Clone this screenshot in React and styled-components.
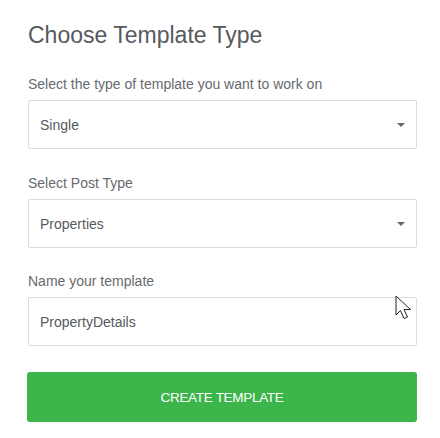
import styled, { createGlobalStyle } from "styled-components"

const GlobalStyle = createGlobalStyle`
  body {
    margin: 0;
    background: #fff;
    font-family: "Liberation Sans", Arial, sans-serif;
  }
`

const Page = styled.div`
  width: 440px;
  height: 438px;
  box-sizing: border-box;
  padding: 20px 23px 0 28px;
  display: flex;
  flex-direction: column;
`

const Title = styled.h1`
  margin: 0 0 26px;
  font-size: 23px;
  font-weight: normal;
  line-height: 30px;
  color: #555a5e;
`

const Field = styled.div`
  display: flex;
  flex-direction: column;
  margin-bottom: ${(p) => p.gap || 26}px;
`

const Label = styled.label`
  font-size: 14px;
  line-height: 16px;
  color: #666a6e;
  margin-bottom: 8px;
`

const Box = styled.div`
  position: relative;
  height: 49px;
  box-sizing: border-box;
  border: 1px solid #dcdcdc;
  border-radius: 2px;
  display: flex;
  align-items: center;
  justify-content: space-between;
  padding: 0 11px 0 11px;
  font-size: 14px;
  color: #555a5e;
`

const Caret = styled.span`
  width: 0;
  height: 0;
  border-left: 4px solid transparent;
  border-right: 4px solid transparent;
  border-top: 4px solid #666;
`

const Pointer = styled.svg`
  position: absolute;
  right: 1px;
  top: -3px;
`

const Button = styled.button`
  margin-left: -1px;
  height: 50px;
  border: none;
  border-radius: 3px;
  background: #3cb54b;
  color: #fff;
  font-family: "Liberation Sans", Arial, sans-serif;
  font-size: 13.5px;
  letter-spacing: -0.3px;
  cursor: pointer;
`

function Select({ value }) {
  return (
    <Box>
      <span>{value}</span>
      <Caret />
    </Box>
  )
}

export default function App() {
  return (
    <>
      <GlobalStyle />
      <Page>
        <Title>Choose Template Type</Title>
        <Field>
          <Label>Select the type of template you want to work on</Label>
          <Select value="Single" />
        </Field>
        <Field gap={25}>
          <Label>Select Post Type</Label>
          <Select value="Properties" />
        </Field>
        <Field gap={26}>
          <Label>Name your template</Label>
          <Box>
            <span>PropertyDetails</span>
            <Pointer width="20" height="27" viewBox="0 0 20 27">
              <path
                d="M1 1 L1 20 L5.5 15.5 L9 23.5 L12.5 22 L9 14.5 L15.5 14.5 Z"
                fill="#fff"
                stroke="#222"
                strokeWidth="1"
                strokeLinejoin="miter"
              />
            </Pointer>
          </Box>
        </Field>
        <Button>CREATE TEMPLATE</Button>
      </Page>
    </>
  )
}
